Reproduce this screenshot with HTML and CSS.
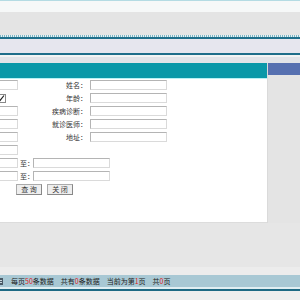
FILE: index.html
```html
<!DOCTYPE html>
<html>
<head>
<meta charset="utf-8">
<link rel="stylesheet" href="styles.css">
</head>
<body>
<div class="page">
  <div class="hd-top"></div>
  <div class="hd-white"></div>
  <div class="hd-gray"></div>
  <div class="hd-dots"></div>
  <div class="hd-dark"></div>
  <div class="hd-light"></div>
  <div class="hd-dark2"></div>
  <div class="hd-white2"></div>
  <div class="hd-light2"></div>
  <div class="main">
    <div class="panel">
      <div class="panel-head"></div>
      <div class="panel-body">
        <div class="form">
          <div class="row">
            <div class="lcell"><span class="inp w48"></span></div>
            <div class="lbl">姓名：</div>
            <span class="inp w77"></span>
          </div>
          <div class="row">
            <div class="lcell"><span class="chk"><svg width="8" height="8" viewBox="0 0 8 8"><path d="M1 4.5 L3 6.5 L7 1.5" fill="none" stroke="#222" stroke-width="1.2"/></svg></span></div>
            <div class="lbl">年龄：</div>
            <span class="inp w77"></span>
          </div>
          <div class="row">
            <div class="lcell"><span class="inp w48"></span></div>
            <div class="lbl">疾病诊断：</div>
            <span class="inp w77"></span>
          </div>
          <div class="row">
            <div class="lcell"><span class="inp w48"></span></div>
            <div class="lbl">就诊医师：</div>
            <span class="inp w77"></span>
          </div>
          <div class="row">
            <div class="lcell"><span class="inp w48"></span></div>
            <div class="lbl">地址：</div>
            <span class="inp w77"></span>
          </div>
          <div class="row">
            <div class="lcell"><span class="inp w48"></span></div>
          </div>
          <div class="row">
            <div class="lcell"><span class="inp w48"></span></div>
            <div class="to">至：</div>
            <span class="inp w77"></span>
          </div>
          <div class="row">
            <div class="lcell"><span class="inp w48"></span></div>
            <div class="to">至：</div>
            <span class="inp w77"></span>
          </div>
          <div class="btns">
            <span class="btn">查 询</span>
            <span class="btn">关 闭</span>
          </div>
        </div>
      </div>
    </div>
    <div class="side">
      <div class="side-head"></div>
    </div>
  </div>
  <div class="gap"></div>
  <div class="status-top"></div>
  <div class="status">
    <svg class="icon" width="4" height="9" viewBox="0 0 4 9"><rect x="0" y="1" width="3" height="7" fill="#4a5a66"/><rect x="0" y="3" width="2" height="1" fill="#c8d8de"/><rect x="0" y="5" width="2" height="1" fill="#c8d8de"/></svg>
    <span class="item first">每页<em>50</em>条数据</span>
    <span class="item">共有<em>0</em>条数据</span>
    <span class="item">当前为第<em>1</em>页</span>
    <span class="item">共<em>0</em>页</span>
  </div>
  <div class="status-l1"></div>
  <div class="status-l2"></div>
  <div class="foot"></div>
</div>
</body>
</html>
```
FILE: styles.css
```css
html, body {
  margin: 0;
  padding: 0;
  background: #e6e6e6;
  font-family: "Noto Sans CJK SC", "Liberation Sans", sans-serif;
  font-size: 7px;
  color: #333;
}
.page {
  width: 300px;
  height: 300px;
  overflow: hidden;
  display: flex;
  flex-direction: column;
}
.hd-top { height: 1px; background: #b4dbe3; }
.hd-white { height: 11px; background: #f6f8f8; }
.hd-gray { height: 23px; background: #e4e4e4; }
.hd-dots {
  height: 2px;
  background: repeating-linear-gradient(90deg, #7ab4c4 0 1px, #e8f0f2 1px 2px);
}
.hd-dark { height: 2px; background: #1e6e8a; }
.hd-light { height: 14px; background: #e6e6ee; }
.hd-dark2 { height: 2px; background: #1e6e8a; }
.hd-white2 { height: 2px; background: #f2f4f4; }
.hd-light2 { height: 6px; background: #e2e4e8; }
.main {
  display: flex;
  height: 160px;
}
.panel {
  width: 267px;
  display: flex;
  flex-direction: column;
}
.panel-head {
  height: 15px;
  background: #0a98a8;
  border-bottom: 1px solid #b8f0f4;
}
.panel-body {
  flex: 1;
  background: #fff;
  border-bottom: 1px solid #dcdcdc;
}
.side {
  flex: 1;
  background: #e4e4e4;
  border-left: 1px solid #dadada;
}
.side-head {
  height: 12px;
  background: #5670b0;
}
.form {
  margin-left: -30px;
  padding-top: 1px;
  display: flex;
  flex-direction: column;
  gap: 3px;
}
.row {
  display: flex;
  align-items: center;
  height: 10px;
}
.lcell {
  width: 48px;
  display: flex;
}
.lbl {
  width: 72px;
  text-align: right;
  line-height: 10px;
  padding-right: 3px;
  box-sizing: border-box;
}
.to {
  width: 13px;
  padding-left: 2px;
  line-height: 10px;
}
.inp {
  display: block;
  height: 10px;
  box-sizing: border-box;
  background: #fff;
  border: 1px solid #b4b4b4;
  border-right-color: #dadada;
  border-bottom-color: #dadada;
}
.w48 { width: 48px; }
.w77 { width: 77px; }
.chk {
  display: flex;
  align-items: center;
  justify-content: flex-end;
  margin-left: 26px;
  width: 10px;
  height: 9px;
  box-sizing: border-box;
  border: 1px solid #888;
  background: #fff;
}
.btns {
  display: flex;
  gap: 5px;
  margin-left: 46px;
}
.btn {
  width: 26px;
  height: 11px;
  box-sizing: border-box;
  border: 1px solid #aaa;
  border-right-color: #888;
  border-bottom-color: #888;
  background: #eeeeee;
  text-align: center;
  line-height: 9px;
  color: #333;
}
.gap {
  height: 44px;
  background: #e6e6e6;
}
.status-top { height: 8px; background: #ececec; }
.status {
  height: 12px;
  background: #a8c8d4;
  display: flex;
  align-items: center;
  line-height: 12px;
  white-space: nowrap;
  color: #222;
}
.status em { font-style: normal; color: #e02020; }
.icon { flex: none; }
.item { margin-left: 7px; }
.item.first { margin-left: 7px; }
.status-l1 { height: 2px; background: #e0eef2; }
.status-l2 { height: 2px; background: #1e6a84; }
.foot { flex: 1; background: #eeeeee; }
```
